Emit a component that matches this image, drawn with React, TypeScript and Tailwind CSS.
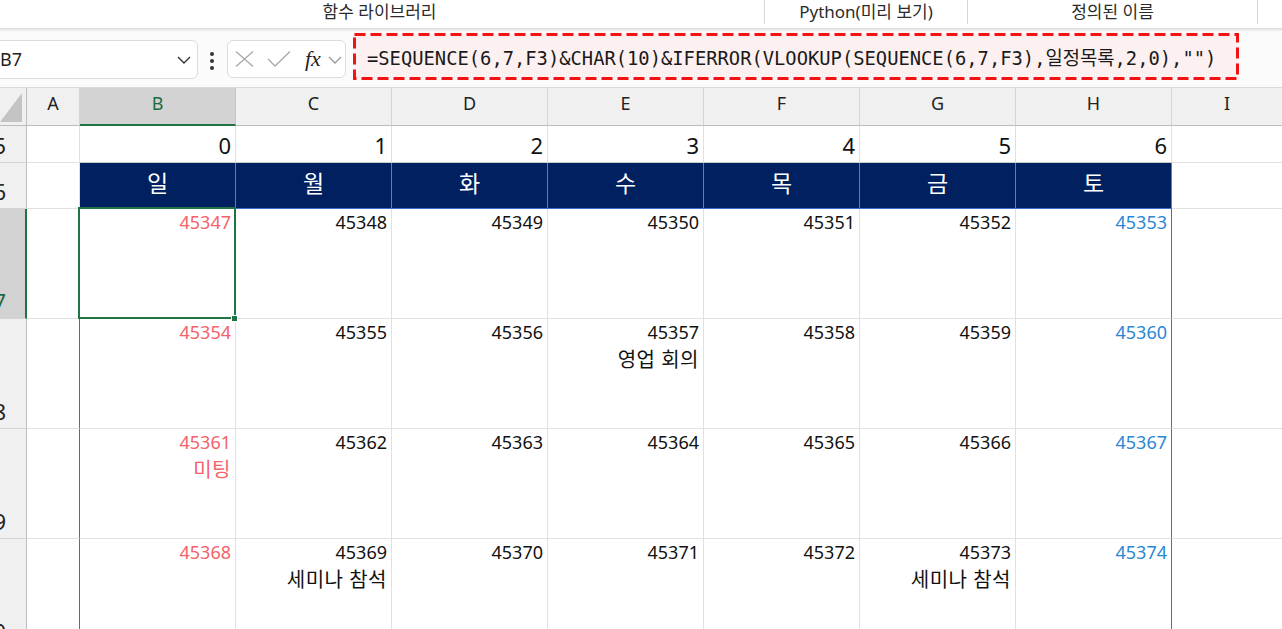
import React from "react";

const days = ["일", "월", "화", "수", "목", "금", "토"];
const letters = ["B", "C", "D", "E", "F", "G", "H"];
const notes: Record<number, string> = {
  45357: "영업 회의",
  45361: "미팅",
  45369: "세미나 참석",
  45373: "세미나 참석",
};
const weeks = [0, 1, 2, 3].map((w) =>
  Array.from({ length: 7 }, (_, d) => 45347 + w * 7 + d)
);

const RibbonLabels = () => (
  <div className="flex h-[28px] items-start bg-white text-[17px] text-[#2b2b2b] font-['Noto_Sans','Noto_Sans_CJK_KR',sans-serif]">
    <div className="ml-[-5px] flex h-[24px] w-[770px] items-center justify-center border-r border-r-[#d6d6d6]">
      함수 라이브러리
    </div>
    <div className="flex h-[24px] w-[203px] items-center justify-center border-r border-r-[#d6d6d6]">
      Python(미리 보기)
    </div>
    <div className="flex h-[24px] w-[290px] items-center justify-center border-r border-r-[#d6d6d6]">
      정의된 이름
    </div>
  </div>
);

const SmallChevron = ({ color }: { color: string }) => (
  <svg width="14" height="8" viewBox="0 0 14 8">
    <polyline points="1,1 7,7 13,1" fill="none" stroke={color} strokeWidth="1.4" />
  </svg>
);

const FormulaBar = () => (
  <div className="flex h-[56px] items-start bg-[#fbfbfb]">
    {/* Name box */}
    <div className="ml-[-10px] mt-[9px] flex h-[39px] w-[208px] items-center justify-between rounded-[6px] border border-[#dcdcdc] bg-white pl-[9px] pr-[6px] text-[18px] text-[#222] font-['Noto_Sans',sans-serif]">
      <span>B7</span>
      <SmallChevron color="#333" />
    </div>
    {/* vertical dots */}
    <div className="ml-[11px] mt-[21px] flex w-[5px] flex-col items-center gap-[3px]">
      <span className="h-[4px] w-[4px] rounded-full bg-[#333]" />
      <span className="h-[4px] w-[4px] rounded-full bg-[#333]" />
      <span className="h-[4px] w-[4px] rounded-full bg-[#333]" />
    </div>
    {/* fx box */}
    <div className="ml-[13px] mt-[9px] flex h-[38px] w-[119px] items-center rounded-[6px] border border-[#dcdcdc] bg-white pl-[7px]">
      <svg width="19" height="16" viewBox="0 0 19 16">
        <line x1="1" y1="0.5" x2="18" y2="15.5" stroke="#a8a8a8" strokeWidth="1.3" />
        <line x1="18" y1="0.5" x2="1" y2="15.5" stroke="#a8a8a8" strokeWidth="1.3" />
      </svg>
      <svg className="ml-[13px]" width="24" height="16" viewBox="0 0 24 16">
        <polyline points="1,8 8,15 23,0.5" fill="none" stroke="#a8a8a8" strokeWidth="1.3" />
      </svg>
      <span className="ml-[14px] text-[22px] italic leading-none text-[#222] font-['Liberation_Serif',serif]">
        fx
      </span>
      <span className="ml-[7px] mt-[2px]">
        <SmallChevron color="#9a9a9a" />
      </span>
    </div>
    {/* formula */}
    <div className="relative ml-[7px] mt-[2px] flex h-[47px] w-[886px] items-center bg-[#fdf0f0] pl-[14px] pt-[6px] text-[18.8px] text-[#1a1a1a] font-['DejaVu_Sans_Mono','Noto_Sans_CJK_KR',monospace]">
      =SEQUENCE(6,7,F3)&amp;CHAR(10)&amp;IFERROR(VLOOKUP(SEQUENCE(6,7,F3),일정목록,2,0),"")
      <svg className="absolute inset-0" width="886" height="47">
        <rect x="1.5" y="1.5" width="883" height="44" fill="none" stroke="#f01414" strokeWidth="3" strokeDasharray="11 5" />
      </svg>
    </div>
  </div>
);

const RowHeader = ({ n, active }: { n: number; active?: boolean }) => (
  <div
    className={
      active
        ? "flex items-end justify-end overflow-hidden whitespace-nowrap border-b border-r-2 border-b-[#d4d4d4] border-r-[#217346] bg-[#d2d2d2] pb-[3px] pr-[19px] text-[22px] leading-[28px] text-[#1e6b41]"
        : "flex items-end justify-end overflow-hidden whitespace-nowrap border-b border-r border-b-[#d4d4d4] border-r-[#bdbdbd] bg-[#f0f0f0] pb-[3px] pr-[20px] text-[22px] leading-[28px] text-[#222]"
    }
  >
    {n}
  </div>
);

const Sheet = () => {
  const cells: React.ReactNode[] = [];

  // column header row
  cells.push(
    <div key="corner" className="relative border-b border-r border-b-[#bdbdbd] border-r-[#bdbdbd] bg-[#f0f0f0]">
      <svg className="absolute left-0 top-[5px]" width="23" height="30" viewBox="0 0 23 30">
        <polygon points="0,29 22,0 22,29" fill="#c4c4c4" />
      </svg>
    </div>
  );
  cells.push(
    <div key="hA" className="flex items-center justify-center border-b border-r border-b-[#bdbdbd] border-r-[#d4d4d4] bg-[#f0f0f0] pb-[6px] text-[18px] text-[#222]">
      A
    </div>
  );
  letters.forEach((l) =>
    cells.push(
      l === "B" ? (
        <div key={"h" + l} className="flex items-center justify-center border-b-2 border-r border-b-[#217346] border-r-[#c4c4c4] bg-[#d3d3d3] pb-[5px] text-[18px] text-[#1e6b41]">
          {l}
        </div>
      ) : (
        <div key={"h" + l} className="flex items-center justify-center border-b border-r border-b-[#bdbdbd] border-r-[#d4d4d4] bg-[#f0f0f0] pb-[6px] text-[18px] text-[#222]">
          {l}
        </div>
      )
    )
  );
  cells.push(
    <div key="hI" className="flex items-center justify-center border-b border-b-[#bdbdbd] bg-[#f0f0f0] pb-[6px] text-[18px] text-[#222]">
      I
    </div>
  );

  // row 5: day index
  cells.push(<RowHeader key="r5" n={5} />);
  cells.push(<div key="r5A" className="border-b border-r border-b-[#e1e1e1] border-r-[#e1e1e1]" />);
  days.forEach((_, i) =>
    cells.push(
      <div key={"r5" + i} className="flex items-end justify-end border-b border-r border-b-[#c8c8c8] border-r-[#e1e1e1] pb-[3px] pr-[4px] text-[22px] leading-[28px] text-[#111]">
        {i}
      </div>
    )
  );
  cells.push(<div key="r5I" className="border-b border-b-[#e1e1e1]" />);

  // row 6: weekday titles
  cells.push(<RowHeader key="r6" n={6} />);
  cells.push(<div key="r6A" className="border-b border-r border-b-[#e1e1e1] border-r-[#e1e1e1]" />);
  days.forEach((d) =>
    cells.push(
      <div key={"r6" + d} className="flex items-center justify-center border-b border-r border-b-[#3a6fd0] border-r-[#7a7a7a] bg-[#002060] pb-[5px] text-[23px] text-white">
        {d}
      </div>
    )
  );
  cells.push(<div key="r6I" className="border-b border-b-[#e1e1e1]" />);

  // rows 7-10: calendar
  weeks.forEach((week, w) => {
    const row = 7 + w;
    cells.push(<RowHeader key={"r" + row} n={row} active={row === 7} />);
    cells.push(
      <div key={"r" + row + "A"} className="border-b border-r border-b-[#e1e1e1] border-r-[#3a6fd0]" />
    );
    week.forEach((n, d) => {
      const color = d === 0 ? "text-[#f4626a]" : d === 6 ? "text-[#2b86d4]" : "text-[#111]";
      const note = notes[n];
      cells.push(
        <div
          key={n}
          className={
            d === 6
              ? "relative flex flex-col items-end border-b border-r border-b-[#e1e1e1] border-r-[#3a6fd0] pr-[4px] text-[18px] leading-[27px]"
              : "relative flex flex-col items-end border-b border-r border-b-[#e1e1e1] border-r-[#e1e1e1] pr-[4px] text-[18px] leading-[27px]"
          }
        >
          <span className={color}>{n}</span>
          {note && <span className={"text-[20px] leading-[27px] tracking-[0.5px] " + color}>{note}</span>}
          {row === 7 && d === 0 && (
            <>
              <div className="absolute bottom-[-1px] left-[-2px] right-[-1px] top-[-2px] z-10 border-2 border-[#217346]" />
              <div className="absolute left-[151px] top-[106px] z-20 h-[7px] w-[7px] border border-white bg-[#217346]" />
            </>
          )}
        </div>
      );
    });
    cells.push(<div key={"r" + row + "I"} className="border-b border-b-[#e1e1e1]" />);
  });

  return (
    <div className="grid grid-cols-[27px_53px_repeat(7,156px)_1fr] grid-rows-[38px_37px_46px_110px_110px_110px_110px] bg-white font-['Noto_Sans','Noto_Sans_CJK_KR',sans-serif]">
      {cells}
    </div>
  );
};

export default function App() {
  return (
    <div className="h-[629px] w-[1282px] overflow-hidden bg-white">
      <RibbonLabels />
      <div className="h-[3px] bg-gradient-to-b from-[#dcdcdc] to-[#f2f2f2]" />
      <FormulaBar />
      <div className="h-px bg-[#d9d9d9]" />
      <Sheet />
    </div>
  );
}
